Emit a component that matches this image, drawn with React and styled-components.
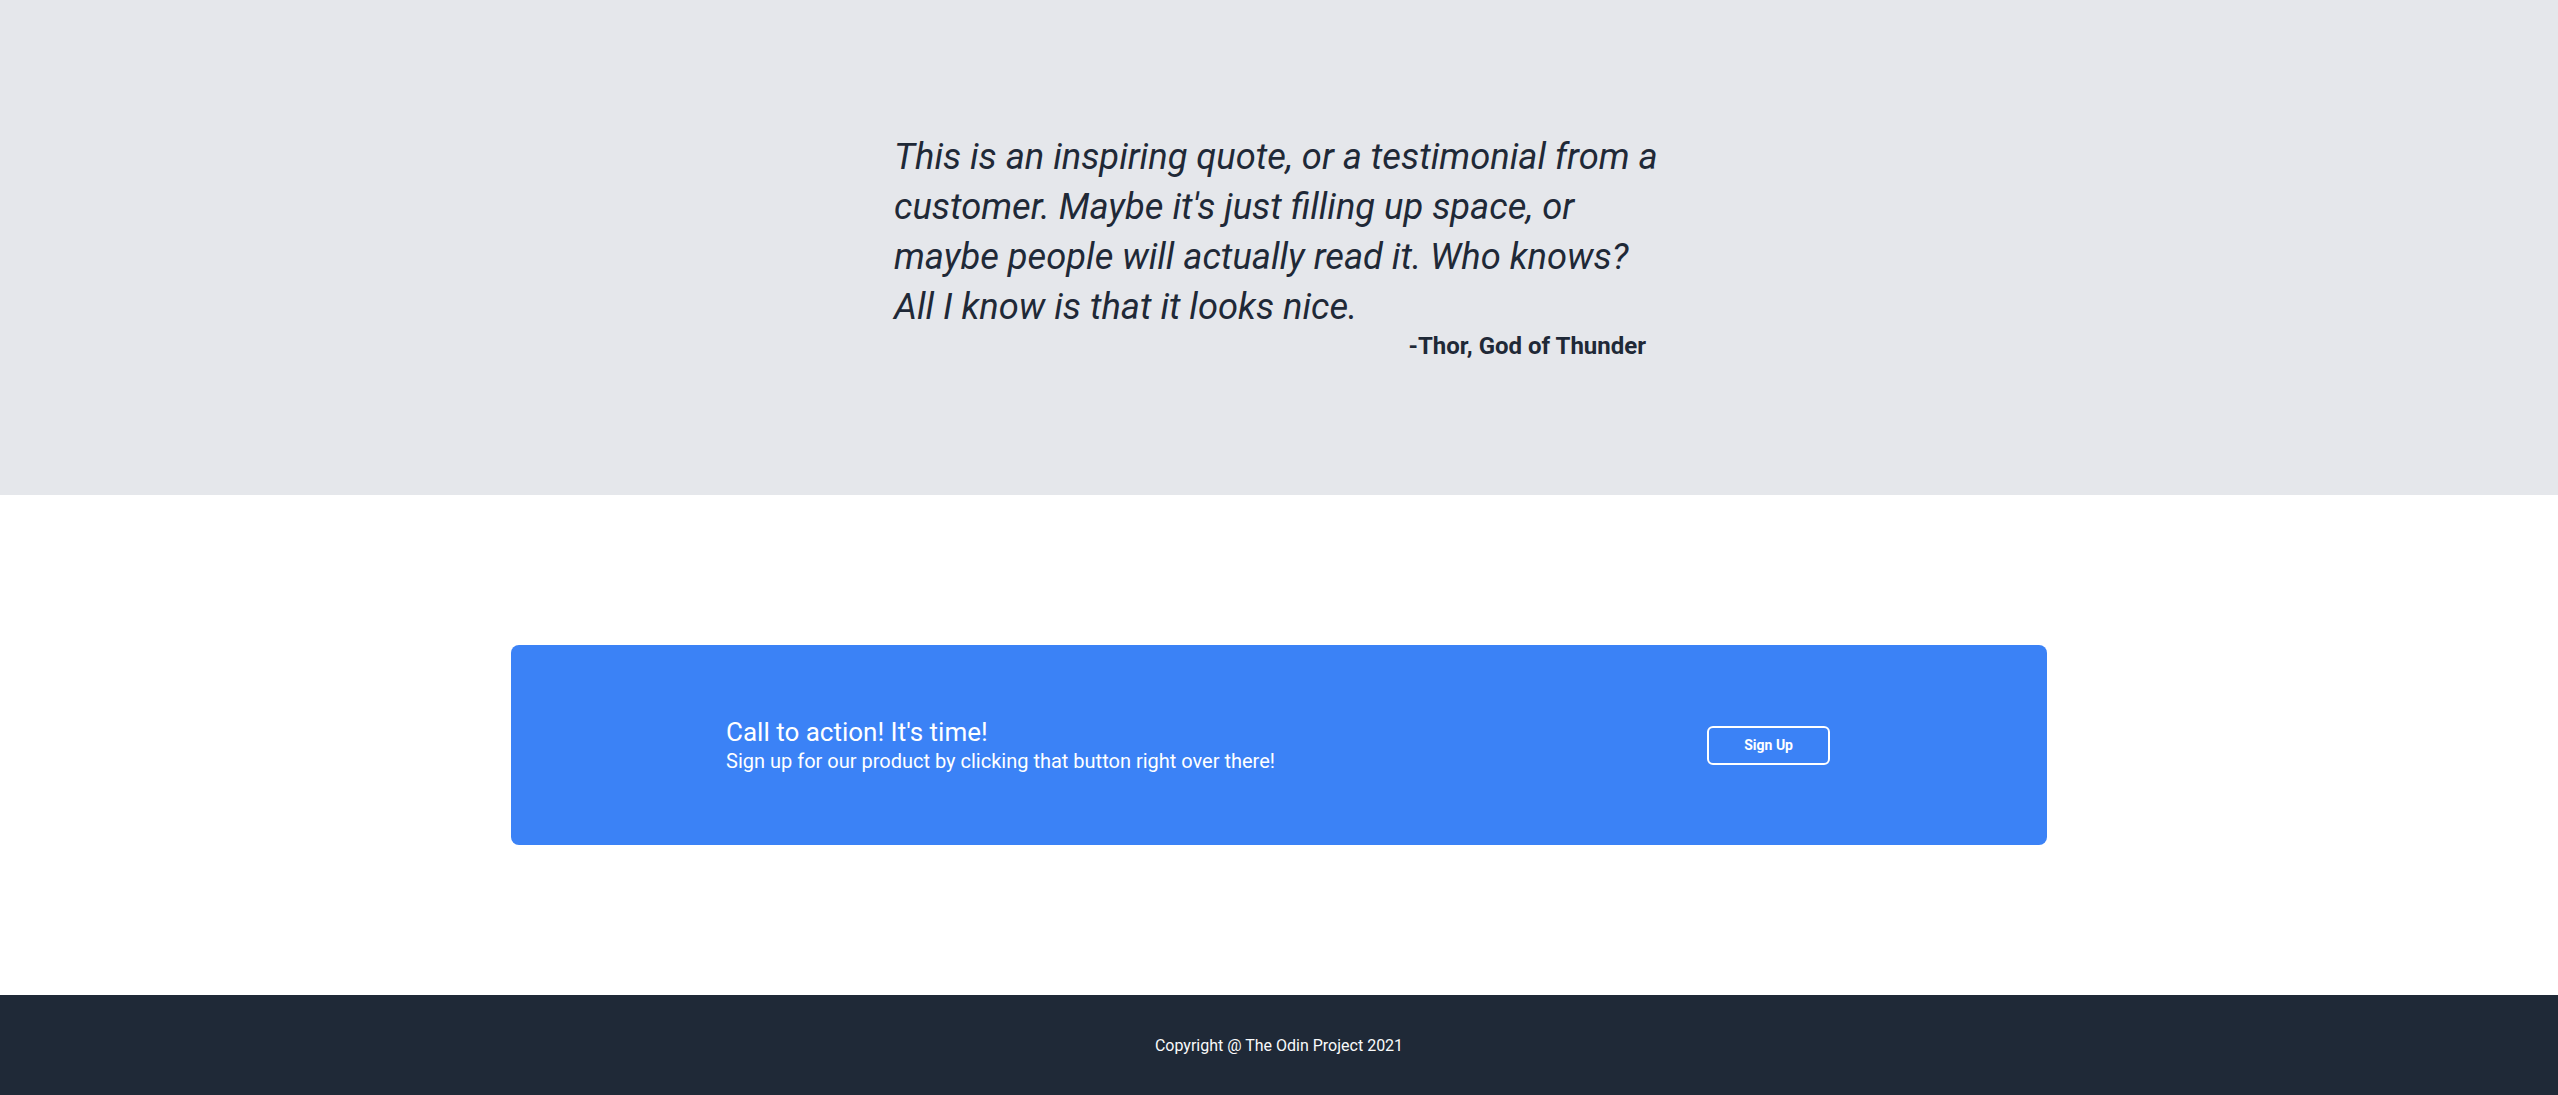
import styled, { createGlobalStyle } from 'styled-components';

const GlobalStyle = createGlobalStyle`
  * {
    box-sizing: border-box;
  }
  body {
    margin: 0;
    font-family: Roboto, 'Liberation Sans', sans-serif;
    background: #ffffff;
  }
`;

const QuoteSection = styled.section`
  background-color: #e5e7eb;
  height: 495px;
  padding-top: 132px;
  display: flex;
  justify-content: center;
`;

const QuoteBox = styled.figure`
  margin: 0;
  width: 770px;
  display: flex;
  flex-direction: column;
  color: #1f2937;
`;

const QuoteText = styled.blockquote`
  margin: 0;
  font-size: 36.3px;
  line-height: 50px;
  font-style: italic;
  font-weight: 400;
`;

const Author = styled.figcaption`
  align-self: flex-end;
  padding-right: 18px;
  font-size: 24px;
  font-weight: 700;
  line-height: 28px;
`;

const CtaSection = styled.section`
  height: 500px;
  padding: 150px 0;
  display: flex;
  justify-content: center;
`;

const CtaCard = styled.div`
  width: 1536px;
  height: 200px;
  background-color: #3b82f6;
  border-radius: 8px;
  padding: 0 217px 0 215px;
  display: flex;
  align-items: center;
  justify-content: space-between;
  color: #ffffff;
`;

const CtaText = styled.div`
  display: flex;
  flex-direction: column;
`;

const CtaTitle = styled.h2`
  margin: 0;
  font-size: 26px;
  font-weight: 400;
  line-height: 30px;
`;

const CtaSub = styled.p`
  margin: 2px 0 0;
  font-size: 20px;
  line-height: 24px;
`;

const Button = styled.button`
  background: transparent;
  color: #ffffff;
  border: 2px solid #ffffff;
  border-radius: 6px;
  padding: 10px 35px;
  font-family: inherit;
  font-size: 14px;
  font-weight: 700;
  line-height: 15px;
  cursor: pointer;
`;

const Footer = styled.footer`
  height: 100px;
  background-color: #1f2937;
  color: #f9fafb;
  display: flex;
  align-items: center;
  justify-content: center;
  font-size: 16px;
`;

export default function App() {
  return (
    <>
      <GlobalStyle />
      <QuoteSection>
        <QuoteBox>
          <QuoteText>
            This is an inspiring quote, or a testimonial from a customer. Maybe it's just
            filling up space, or maybe people will actually read it. Who knows? All I know is
            that it looks nice.
          </QuoteText>
          <Author>-Thor, God of Thunder</Author>
        </QuoteBox>
      </QuoteSection>
      <CtaSection>
        <CtaCard>
          <CtaText>
            <CtaTitle>Call to action! It's time!</CtaTitle>
            <CtaSub>Sign up for our product by clicking that button right over there!</CtaSub>
          </CtaText>
          <Button>Sign Up</Button>
        </CtaCard>
      </CtaSection>
      <Footer>Copyright @ The Odin Project 2021</Footer>
    </>
  );
}
